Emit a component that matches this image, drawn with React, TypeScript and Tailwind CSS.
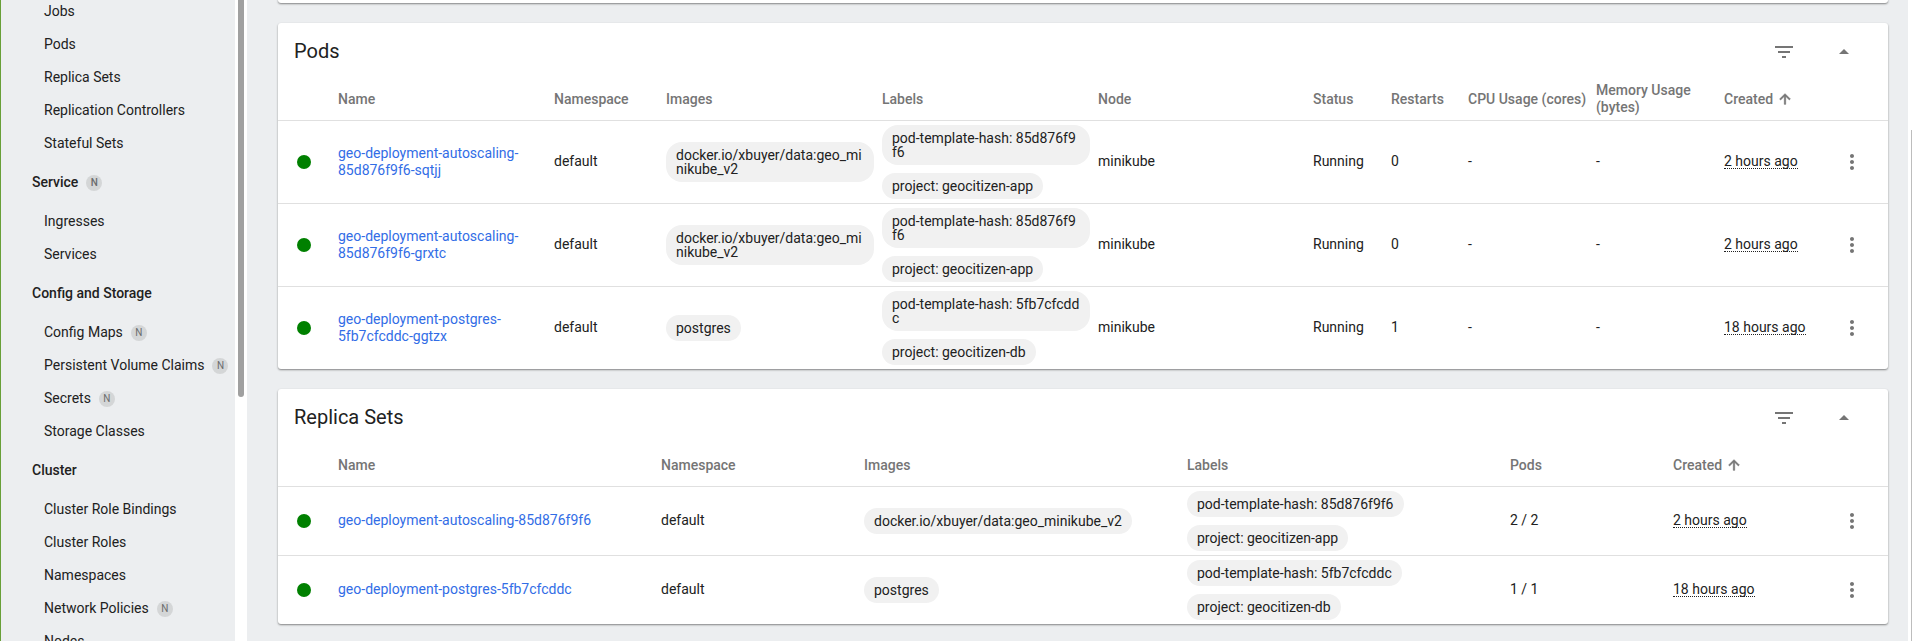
import React from "react";

const Badge = () => (
  <span className="ml-2 inline-flex h-4 w-4 items-center justify-center rounded-full bg-[#d4d6d7] text-[10px] leading-none text-[#6a6c6e]">N</span>
);

const Item = ({ label, badge }: { label: string; badge?: boolean }) => (
  <div className="flex h-[33px] items-center pl-[43px] text-[14px] text-[#212121]">
    <span>{label}</span>
    {badge && <Badge />}
  </div>
);

const Section = ({ label, badge }: { label: string; badge?: boolean }) => (
  <div className="flex h-[45px] items-center pl-[31px] text-[14px] font-medium text-[#212121]">
    <span>{label}</span>
    {badge && <Badge />}
  </div>
);

const Chip = ({ children }: { children: React.ReactNode }) => (
  <div className="w-fit max-w-[208px] rounded-2xl bg-[#f1f1f1] px-[10px] py-[6px] text-[14px] leading-[14px] break-all text-[#212121]">
    {children}
  </div>
);

const Dot = () => <div className="ml-[19px] h-[14px] w-[14px] rounded-full bg-[#008000]" />;

const Dots = () => (
  <svg width="24" height="24" viewBox="0 0 24 24" fill="#757575" className="block">
    <path d="M12 8c1.1 0 2-.9 2-2s-.9-2-2-2-2 .9-2 2 .9 2 2 2zm0 2c-1.1 0-2 .9-2 2s.9 2 2 2 2-.9 2-2-.9-2-2-2zm0 6c-1.1 0-2 .9-2 2s.9 2 2 2 2-.9 2-2-.9-2-2-2z" />
  </svg>
);

const CardHeader = ({ title }: { title: string }) => (
  <div className="flex h-[58px] items-center pl-4 text-[20px] text-[#212121]">
    <span className="mb-[2px] flex-1">{title}</span>
    <svg width="24" height="24" viewBox="0 0 24 24" fill="#757575" className="mr-[36px] block">
      <path d="M10 18h4v-2h-4v2zM3 6v2h18V6H3zm3 7h12v-2H6v2z" />
    </svg>
    <svg width="24" height="24" viewBox="0 0 24 24" fill="#757575" className="mr-[32px] block">
      <path d="M7 14l5-5 5 5z" />
    </svg>
  </div>
);

const Th = ({ children }: { children?: React.ReactNode }) => (
  <th className="border-b border-[#e0e0e0] p-0 pr-2 pb-[2px] text-left align-middle text-[14px] leading-[17px] font-medium text-[#757575]">{children}</th>
);

const Td = ({ children, line }: { children?: React.ReactNode; line?: boolean }) => (
  <td className={`border-[#e0e0e0] p-0 pr-2 align-middle text-[14px] leading-[17px] text-[#212121] ${line ? "border-b" : ""}`}>{children}</td>
);

const Created = () => (
  <span className="inline-flex items-center">
    Created
    <svg width="16" height="16" viewBox="0 0 24 24" fill="#757575" stroke="#757575" strokeWidth="1" className="ml-[4px]">
      <path d="M4 12l1.41 1.41L11 7.83V20h2V7.83l5.58 5.59L20 12l-8-8-8 8z" />
    </svg>
  </span>
);

const Time = ({ t }: { t: string }) => (
  <span className="inline-block border-b border-dotted border-[#212121] leading-[14px] whitespace-nowrap">{t}</span>
);

const Link = ({ children }: { children: React.ReactNode }) => (
  <a className="text-[#326de6]">{children}</a>
);

const Action = () => (
  <div className="flex justify-end pr-[16px]">
    <Dots />
  </div>
);

const pods = [
  { name: "geo-deployment-autoscaling-85d876f9f6-sqtjj", image: "docker.io/xbuyer/data:geo_minikube_v2", hash: "85d876f9f6", project: "geocitizen-app", restarts: 0, created: "2 hours ago" },
  { name: "geo-deployment-autoscaling-85d876f9f6-grxtc", image: "docker.io/xbuyer/data:geo_minikube_v2", hash: "85d876f9f6", project: "geocitizen-app", restarts: 0, created: "2 hours ago" },
  { name: "geo-deployment-postgres-5fb7cfcddc-ggtzx", image: "postgres", hash: "5fb7cfcddc", project: "geocitizen-db", restarts: 1, created: "18 hours ago" },
];

const sets = [
  { name: "geo-deployment-autoscaling-85d876f9f6", image: "docker.io/xbuyer/data:geo_minikube_v2", hash: "85d876f9f6", project: "geocitizen-app", pods: "2 / 2", created: "2 hours ago" },
  { name: "geo-deployment-postgres-5fb7cfcddc", image: "postgres", hash: "5fb7cfcddc", project: "geocitizen-db", pods: "1 / 1", created: "18 hours ago" },
];

const Labels = ({ hash, project }: { hash: string; project: string }) => (
  <div className="flex flex-col gap-2">
    <Chip>pod-template-hash: {hash}</Chip>
    <Chip>project: {project}</Chip>
  </div>
);

export default function App() {
  return (
    <div className="flex h-[641px] w-[1912px] overflow-hidden bg-white font-['Roboto',sans-serif]">
      <aside className="h-full w-[235px] shrink-0 overflow-hidden border-l border-[#689f38] bg-[#eceef0]">
        <div className="-mt-[5px]">
          <Item label="Jobs" />
          <Item label="Pods" />
          <Item label="Replica Sets" />
          <Item label="Replication Controllers" />
          <Item label="Stateful Sets" />
          <Section label="Service" badge />
          <Item label="Ingresses" />
          <Item label="Services" />
          <Section label="Config and Storage" />
          <Item label="Config Maps" badge />
          <Item label="Persistent Volume Claims" badge />
          <Item label="Secrets" badge />
          <Item label="Storage Classes" />
          <Section label="Cluster" />
          <Item label="Cluster Role Bindings" />
          <Item label="Cluster Roles" />
          <Item label="Namespaces" />
          <Item label="Network Policies" badge />
          <Item label="Nodes" />
        </div>
      </aside>
      <div className="h-full w-3 shrink-0 bg-white px-[3px]">
        <div className="h-[397px] w-[6px] rounded-b-[3px] bg-[#a0a0a0]" />
      </div>
      <main className="h-full w-[1661px] shrink-0 overflow-hidden bg-[#eceef0] pr-5 pl-[31px]">
        <div className="-mt-[1px] h-[4px] rounded-b-[3px] bg-white shadow-[0_1px_2px_rgba(0,0,0,0.45)]" />
        <section className="mt-5 rounded-[3px] bg-white shadow-[0_1px_2px_rgba(0,0,0,0.45)]">
          <CardHeader title="Pods" />
          <table className="w-[1610px] table-fixed border-collapse">
            <colgroup>
              <col className="w-[60px]" />
              <col className="w-[216px]" />
              <col className="w-[112px]" />
              <col className="w-[216px]" />
              <col className="w-[216px]" />
              <col className="w-[215px]" />
              <col className="w-[78px]" />
              <col className="w-[77px]" />
              <col className="w-[128px]" />
              <col className="w-[128px]" />
              <col className="w-[108px]" />
              <col />
            </colgroup>
            <thead>
              <tr className="h-[39px]">
                <Th />
                <Th>Name</Th>
                <Th>Namespace</Th>
                <Th>Images</Th>
                <Th>Labels</Th>
                <Th>Node</Th>
                <Th>Status</Th>
                <Th>Restarts</Th>
                <Th>CPU Usage (cores)</Th>
                <Th>Memory Usage (bytes)</Th>
                <Th><Created /></Th>
                <Th />
              </tr>
            </thead>
            <tbody>
              {pods.map((p, i) => (
                <tr key={i} className="h-[83px]">
                  <Td line={i < 2}><Dot /></Td>
                  <Td line={i < 2}><Link>{p.name}</Link></Td>
                  <Td line={i < 2}>default</Td>
                  <Td line={i < 2}><Chip>{p.image}</Chip></Td>
                  <Td line={i < 2}><Labels hash={p.hash} project={p.project} /></Td>
                  <Td line={i < 2}>minikube</Td>
                  <Td line={i < 2}>Running</Td>
                  <Td line={i < 2}>{p.restarts}</Td>
                  <Td line={i < 2}>-</Td>
                  <Td line={i < 2}>-</Td>
                  <Td line={i < 2}><Time t={p.created} /></Td>
                  <Td line={i < 2}><Action /></Td>
                </tr>
              ))}
            </tbody>
          </table>
        </section>
        <section className="mt-5 rounded-[3px] bg-white shadow-[0_1px_2px_rgba(0,0,0,0.45)]">
          <CardHeader title="Replica Sets" />
          <table className="w-[1610px] table-fixed border-collapse">
            <colgroup>
              <col className="w-[60px]" />
              <col className="w-[323px]" />
              <col className="w-[203px]" />
              <col className="w-[323px]" />
              <col className="w-[323px]" />
              <col className="w-[163px]" />
              <col className="w-[163px]" />
              <col />
            </colgroup>
            <thead>
              <tr className="h-[39px]">
                <Th />
                <Th>Name</Th>
                <Th>Namespace</Th>
                <Th>Images</Th>
                <Th>Labels</Th>
                <Th>Pods</Th>
                <Th><Created /></Th>
                <Th />
              </tr>
            </thead>
            <tbody>
              {sets.map((s, i) => (
                <tr key={i} className="h-[69px]">
                  <Td line={i < 1}><Dot /></Td>
                  <Td line={i < 1}><Link>{s.name}</Link></Td>
                  <Td line={i < 1}>default</Td>
                  <Td line={i < 1}><div className="[&>div]:max-w-none"><Chip>{s.image}</Chip></div></Td>
                  <Td line={i < 1}><div className="[&_div]:max-w-none"><Labels hash={s.hash} project={s.project} /></div></Td>
                  <Td line={i < 1}>{s.pods}</Td>
                  <Td line={i < 1}><Time t={s.created} /></Td>
                  <Td line={i < 1}><Action /></Td>
                </tr>
              ))}
            </tbody>
          </table>
        </section>
      </main>
      <div className="flex h-full w-[4px] shrink-0 justify-end bg-white pt-[130px]">
        <div className="h-[511px] w-[1px] bg-[#bdbdbd]" />
      </div>
    </div>
  );
}
